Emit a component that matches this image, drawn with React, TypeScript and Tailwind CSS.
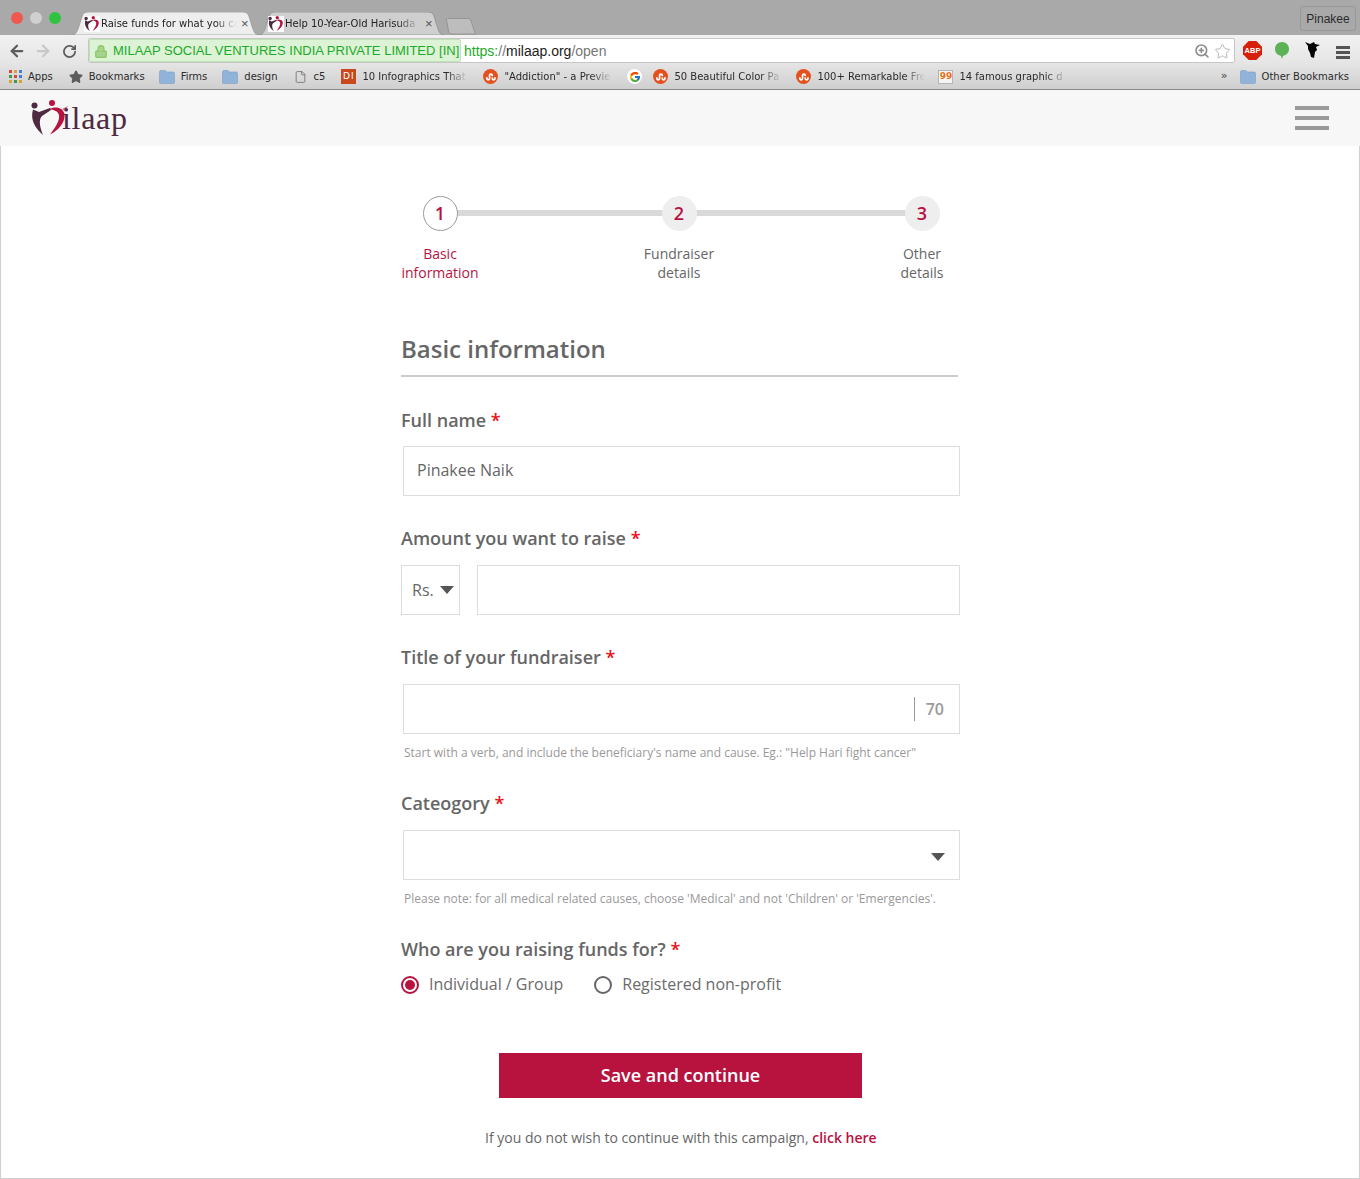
import React from "react";
import { ArrowLeft, ArrowRight, RotateCw, Star, File, ZoomIn, Lock } from "lucide-react";
import { FaStumbleupon } from "react-icons/fa";
import { FcGoogle } from "react-icons/fc";

function MiniLogo({ className }: { className: string }) {
  return (
    <svg viewBox="0 0 38 38" className={className}>
      <rect width="38" height="38" fill="#ffffff" />
      <circle cx="5" cy="6" r="4" fill="#4d2a3f" />
      <circle cx="22" cy="4" r="4" fill="#b8123f" />
      <path d="M3 10 L9 13 L20 9 L21 11 L12 17 C9 20 9 26 14 36 C5 29 0 21 3 10 Z" fill="#4d2a3f" />
      <path d="M19 10 C25 7 34 8 35 15 C36 23 29 31 20 36 C25 29 30 22 29 16 C28 12 24 11 19 10 Z" fill="#b8123f" />
    </svg>
  );
}

function Logo() {
  return (
    <div className="flex items-start h-[38px]">
      <svg viewBox="0 0 38 38" className="w-[38px] h-[38px] shrink-0">
        <circle cx="4.5" cy="6.5" r="3" fill="#4d2a3f" />
        <circle cx="22" cy="4" r="3" fill="#b8123f" />
        <path d="M3 10.5 L9 13 L20 9 L21 11 L12 17 C9 20 9 26 13 36 C5 29 0 21 3 10.5 Z" fill="#4d2a3f" />
        <path d="M19 10 C25 7 33 8 34.5 15 C35.5 23 29 31 20 35.5 C25 29 30 22 29 16 C28 12 24 11 19 10 Z" fill="#b8123f" />
        <path d="M32 10 L38 7 L35 12 Z" fill="#d06a85" />
      </svg>
      <span className="font-['Liberation_Serif',serif] text-[32px] leading-[38px] text-[#4d2a3f] -ml-[6px] tracking-[0.7px]">ilaap</span>
    </div>
  );
}

function Tab({ text, active, widthClass, textClass, iconClass, closeClass }: { text: string; active: boolean; widthClass: string; textClass: string; iconClass: string; closeClass: string }) {
  return (
    <div className={`relative h-[23px] flex items-center ${widthClass}`}>
      <svg viewBox="0 0 186 23" preserveAspectRatio="none" className="absolute inset-0 w-full h-full">
        <path
          d="M0 23 C5 23 6 20 8 14 L11 4 C12 1 14 0 17 0 L170 0 C173 0 175 1 176 4 L179 14 C181 20 182 23 186 23 Z"
          fill={active ? "#eeeeee" : "#cfcfcf"}
          stroke={active ? "#999999" : "#8f8f8f"}
          strokeWidth="0.8"
        />
      </svg>
      <MiniLogo className={`relative w-[16px] h-[16px] shrink-0 ${iconClass}`} />
      <span className={`relative whitespace-nowrap text-[10px] leading-[14px] text-[#222] font-['DejaVu_Sans',sans-serif] [mask-image:linear-gradient(to_right,black_84%,transparent)] ${textClass}`}>{text}</span>
      <span className={`relative text-[13px] leading-none text-[#555] font-['Liberation_Sans',sans-serif] ${closeClass}`}>×</span>
    </div>
  );
}

function Folder() {
  return (
    <svg viewBox="0 0 16 14" className="w-[16px] h-[14px] shrink-0">
      <path d="M0.5 2 C0.5 1 1 0.5 2 0.5 H6 L7.5 2 H14 C15 2 15.5 2.5 15.5 3.5 V12.5 C15.5 13.2 15 13.5 14.5 13.5 H1.5 C1 13.5 0.5 13.2 0.5 12.5 Z" fill="#8fb3d9" stroke="#7d9dc0" strokeWidth="0.6" />
    </svg>
  );
}

function Stumble() {
  return (
    <span className="w-[15px] h-[15px] rounded-full bg-[#e5501f] flex items-center justify-center shrink-0 text-white">
      <FaStumbleupon className="w-[10px] h-[10px]" />
    </span>
  );
}

function Mark({ text, fade, widthClass, className, icon }: { text?: string; fade?: boolean; widthClass?: string; className: string; icon: React.ReactNode }) {
  return (
    <div className={`flex items-center gap-[6px] shrink-0 ${className}`}>
      {icon}
      {text ? (
        <span className={`block whitespace-nowrap text-[10px] leading-[14px] text-[#2b2b2b] ${widthClass ?? ""} ${fade ? "[mask-image:linear-gradient(to_right,black_80%,transparent)]" : ""}`}>{text}</span>
      ) : null}
    </div>
  );
}

function Apps() {
  const colors = ["bg-[#d9453c]", "bg-[#e0a030]", "bg-[#3f7fe0]", "bg-[#3f9a50]", "bg-[#d9453c]", "bg-[#3f7fe0]", "bg-[#e0a030]", "bg-[#3f9a50]", "bg-[#e0a030]"];
  return (
    <span className="grid grid-cols-3 gap-[2px] w-[13px] shrink-0">
      {colors.map((c, i) => (
        <span key={i} className={`w-[3px] h-[3px] ${c}`} />
      ))}
    </span>
  );
}

function Chrome() {
  return (
    <div className="font-['DejaVu_Sans',sans-serif]">
      <div className="relative h-[35px] bg-[#a9a9a9] flex items-end">
        <span className="absolute left-[11px] top-[12px] w-[12px] h-[12px] rounded-full bg-[#f0584f]" />
        <span className="absolute left-[30px] top-[12px] w-[12px] h-[12px] rounded-full bg-[#d0d0d0]" />
        <span className="absolute left-[49px] top-[12px] w-[12px] h-[12px] rounded-full bg-[#2fc43f]" />
        <div className="flex items-end ml-[71px]">
          <Tab text="Raise funds for what you ca" active widthClass="w-[188px]" iconClass="ml-[13px]" textClass="w-[136px] ml-[1px]" closeClass="ml-[4px]" />
          <Tab text="Help 10-Year-Old Harisuda" active={false} widthClass="w-[186px] -ml-[1px]" iconClass="ml-[10px]" textClass="w-[134px] ml-[1px]" closeClass="ml-[6px]" />
          <svg viewBox="0 0 30 17" className="w-[30px] h-[17px] ml-[2px]">
            <path d="M0.5 1.5 C0.5 0.8 1 0.5 2 0.5 H22 C24 0.5 24.5 1.5 25 3 L28 12 C28.6 14 29 15 29.5 16 H6 C4 16 3 15 2.5 13 Z" fill="#bdbdbd" stroke="#8e8e8e" strokeWidth="0.8" />
          </svg>
        </div>
        <div className="absolute left-[1300px] top-[6px] w-[56px] h-[25px] border border-[#989898] rounded-[3px] flex items-center justify-center text-[12px] text-[#2b2b2b] font-['Liberation_Sans',sans-serif]">Pinakee</div>
      </div>
      <div className="h-[27px] bg-gradient-to-b from-[#f1f1f1] to-[#e6e6e6] flex items-start">
        <ArrowLeft className="w-[18px] h-[18px] text-[#5c5c5c] ml-[8px] mt-[7px] shrink-0" strokeWidth={3} />
        <ArrowRight className="w-[18px] h-[18px] text-[#c8c8c8] ml-[8px] mt-[7px] shrink-0" strokeWidth={3} />
        <RotateCw className="w-[15px] h-[15px] text-[#5c5c5c] ml-[10px] mt-[9px] shrink-0" strokeWidth={2.8} />
        <div className="ml-[11px] mt-[3px] w-[1147px] h-[25px] pt-[1px] bg-white rounded-[2px] border border-[#c6c6c6] flex items-center font-['Liberation_Sans',sans-serif] text-[14px] relative z-10 shrink-0">
          <div className="w-[372px] h-[23px] -mt-[1px] bg-[#dcf3d6] border border-[#bfe3b6] rounded-[2px] flex items-center shrink-0 pt-[1px]">
            <Lock className="w-[14px] h-[15px] text-[#8cc46a] fill-[#a6d488] ml-[4px] shrink-0" strokeWidth={2} />
            <span className="ml-[5px] whitespace-nowrap text-[13px] text-[#1eaa2a]">MILAAP SOCIAL VENTURES INDIA PRIVATE LIMITED [IN]</span>
          </div>
          <span className="ml-[3px] text-[#1eaa2a]">https:</span>
          <span className="text-[#777]">//</span>
          <span className="text-[#1c1c1c]">milaap.org</span>
          <span className="text-[#777]">/open</span>
          <ZoomIn className="w-[16px] h-[16px] text-[#8c8c8c] ml-auto mr-[4px]" strokeWidth={2.4} />
          <Star className="w-[17px] h-[17px] text-[#b5b5b5] mr-[3px]" strokeWidth={1.4} />
        </div>
        <span className="ml-[8px] mt-[6px] w-[19px] h-[19px] bg-[#d6200b] flex items-center justify-center text-white text-[7.5px] font-bold font-['Liberation_Sans',sans-serif] [clip-path:polygon(30%_0,70%_0,100%_30%,100%_70%,70%_100%,30%_100%,0_70%,0_30%)]">ABP</span>
        <svg viewBox="0 0 14 17" className="w-[14px] h-[17px] ml-[13px] mt-[7px]">
          <path d="M7 0 C11 0 14 3 14 7 C14 11 11 13 8 14 L7 17 L6 14 C3 13 0 11 0 7 C0 3 3 0 7 0 Z" fill="#5cb255" />
        </svg>
        <svg viewBox="0 0 16 18" className="w-[16px] h-[18px] ml-[16px] mt-[6px]">
          <path d="M0 1 L5 3 L9 1 L10 3 L15 4 L11 6 L12 9 L10 11 L9 17 L6 16 L5 12 L3 8 L3 5 Z" fill="#050505" />
        </svg>
        <div className="ml-[15px] mt-[11px] w-[14px] flex flex-col gap-[2px]">
          <span className="h-[3px] bg-[#555]" />
          <span className="h-[3px] bg-[#555]" />
          <span className="h-[3px] bg-[#555]" />
        </div>
      </div>
      <div className="h-[28px] pt-[2px] bg-gradient-to-b from-[#e6e6e6] to-[#cfcfcf] border-b border-[#8a8a8a] flex items-center">
        <Mark className="ml-[9px]" icon={<Apps />} text="Apps" />
        <Mark className="ml-[16px]" icon={<Star className="w-[14px] h-[14px] text-[#5c5c5c] fill-[#5c5c5c]" />} text="Bookmarks" />
        <Mark className="ml-[14px] gap-[5px]" icon={<Folder />} text="Firms" />
        <Mark className="ml-[15px] gap-[5px]" icon={<Folder />} text="design" />
        <Mark className="ml-[16px] gap-[7px]" icon={<File className="w-[13px] h-[14px] text-[#666]" strokeWidth={1.4} />} text="c5" />
        <Mark className="ml-[16px]" icon={<span className="w-[15px] h-[15px] bg-[#c9481d] flex items-center justify-center text-white text-[9px] leading-none tracking-[1px]">DI</span>} text="10 Infographics That" fade widthClass="w-[106px]" />
        <Mark className="ml-[15px]" icon={<Stumble />} text={'"Addiction" - a Previe'} fade widthClass="w-[108px]" />
        <Mark className="ml-[15px]" icon={<span className="w-[15px] h-[15px] rounded-full bg-white flex items-center justify-center"><FcGoogle className="w-[12px] h-[12px]" /></span>} />
        <Mark className="ml-[11px]" icon={<Stumble />} text="50 Beautiful Color Pa" fade widthClass="w-[108px]" />
        <Mark className="ml-[14px]" icon={<Stumble />} text="100+ Remarkable Fre" fade widthClass="w-[108px]" />
        <Mark className="ml-[13px]" icon={<span className="w-[15px] h-[14px] bg-[#f4f4f4] border border-[#b5b5b5] flex items-center justify-center text-[#e8701a] text-[9px] font-bold leading-none">99</span>} text="14 famous graphic d" fade widthClass="w-[108px]" />
        <span className="ml-auto text-[11px] text-[#444] shrink-0">»</span>
        <Mark className="ml-[12px] mr-[11px] gap-[5px]" icon={<Folder />} text="Other Bookmarks" />
      </div>
    </div>
  );
}

function Req({ text, className }: { text: string; className: string }) {
  return (
    <div className={`text-[18px] leading-[24px] font-semibold text-[#666666] ${className}`}>
      {text} <span className="text-[#e8101a] font-semibold">*</span>
    </div>
  );
}

function Step({ n, label1, label2, first, widthClass }: { n: string; label1: string; label2: string; first?: boolean; widthClass: string }) {
  return (
    <div className={`relative z-10 flex flex-col items-center ${widthClass}`}>
      <div className={`w-[35px] h-[35px] rounded-full flex items-center justify-center text-[18px] font-semibold text-[#b8123f] ${first ? "bg-white border border-[#9a9a9a]" : "bg-[#eeeeee]"}`}>{n}</div>
      <div className={`mt-[13px] text-center text-[14px] leading-[19px] ${first ? "text-[#b8123f]" : "text-[#666]"}`}>
        {label1}
        <br />
        {label2}
      </div>
    </div>
  );
}

const inputBox = "h-[50px] border border-[#dddddd] bg-white";

export default function App() {
  return (
    <div className="w-[1360px] h-[1179px] overflow-hidden bg-white flex flex-col">
      <Chrome />
      <header className="h-[56px] bg-[#f7f7f7] flex items-center justify-between pl-[30px] pr-[31px] shrink-0">
        <Logo />
        <div className="w-[34px] flex flex-col gap-[6px]">
          <span className="h-[4px] bg-[#9a9a9a]" />
          <span className="h-[4px] bg-[#9a9a9a]" />
          <span className="h-[4px] bg-[#9a9a9a]" />
        </div>
      </header>
      <main className="flex-1 border-x border-b border-[#cfcfcf] font-['Open_Sans',sans-serif] text-[#595959]">
        <div className="ml-[400px] w-[559px] pt-[50px]">
          <div className="relative flex">
            <div className="absolute left-[39px] top-[14px] w-[483px] h-[6px] bg-[#d9d9d9]" />
            <Step n="1" label1="Basic" label2="information" first widthClass="w-[78px]" />
            <Step n="2" label1="Fundraiser" label2="details" widthClass="w-[78px] ml-[161px]" />
            <Step n="3" label1="Other" label2="details" widthClass="w-[50px] ml-[179px]" />
          </div>
          <h1 className="mt-[50px] text-[24px] leading-[34px] font-semibold text-[#666666] pb-[9px] border-b-2 border-[#cccccc] w-[557px]">Basic information</h1>
          <Req text="Full name" className="mt-[31px]" />
          <div className={`${inputBox} w-[557px] ml-[2px] mt-[14px] flex items-center pl-[13px] pb-[2px] text-[16px] text-[#666666]`}>Pinakee Naik</div>
          <Req text="Amount you want to raise" className="mt-[30px]" />
          <div className="mt-[15px] flex">
            <div className={`${inputBox} w-[59px] flex items-center pl-[10px] gap-[6px] text-[16px] text-[#666666]`}>
              Rs.
              <span className="w-0 h-0 border-x-[7px] border-x-transparent border-t-[8px] border-t-[#555]" />
            </div>
            <div className={`${inputBox} w-[483px] ml-[17px]`} />
          </div>
          <Req text="Title of your fundraiser" className="mt-[30px]" />
          <div className={`${inputBox} w-[557px] ml-[2px] mt-[15px] flex items-center justify-end`}>
            <div className="h-[24px] border-l border-[#9a9a9a] pl-[11px] pr-[15px] text-[16px] leading-[24px] font-semibold text-[#9a9a9a]">70</div>
          </div>
          <div className="ml-[3px] mt-[11px] text-[12px] leading-[16px] text-[#999] whitespace-nowrap">Start with a verb, and include the beneficiary's name and cause. Eg.: "Help Hari fight cancer"</div>
          <Req text="Cateogory" className="mt-[30px]" />
          <div className={`${inputBox} w-[557px] ml-[2px] mt-[15px] flex items-center justify-end pr-[14px]`}>
            <span className="w-0 h-0 border-x-[7px] border-x-transparent border-t-[8px] border-t-[#555] mt-[3px]" />
          </div>
          <div className="ml-[3px] mt-[11px] text-[12px] leading-[16px] text-[#999] whitespace-nowrap">Please note: for all medical related causes, choose 'Medical' and not 'Children' or 'Emergencies'.</div>
          <Req text="Who are you raising funds for?" className="mt-[30px]" />
          <div className="mt-[11px] flex items-center text-[16px] leading-[24px] text-[#6b6b6b]">
            <span className="w-[18px] h-[18px] rounded-full border-2 border-[#b8123f] flex items-center justify-center shrink-0 mt-[1px]">
              <span className="w-[10px] h-[10px] rounded-full bg-[#b8123f]" />
            </span>
            <span className="ml-[10px]">Individual / Group</span>
            <span className="w-[18px] h-[18px] rounded-full border-2 border-[#666] ml-[31px] shrink-0 mt-[1px]" />
            <span className="ml-[10px]">Registered non-profit</span>
          </div>
          <button className="block mt-[57px] ml-[98px] w-[363px] h-[45px] bg-[#b8123f] text-white text-[18px] font-semibold">Save and continue</button>
          <div className="mt-[30px] ml-[84px] text-[14px] leading-[20px] text-[#666] whitespace-nowrap">
            If you do not wish to continue with this campaign, <span className="text-[#b8123f] font-semibold">click here</span>
          </div>
        </div>
      </main>
    </div>
  );
}
